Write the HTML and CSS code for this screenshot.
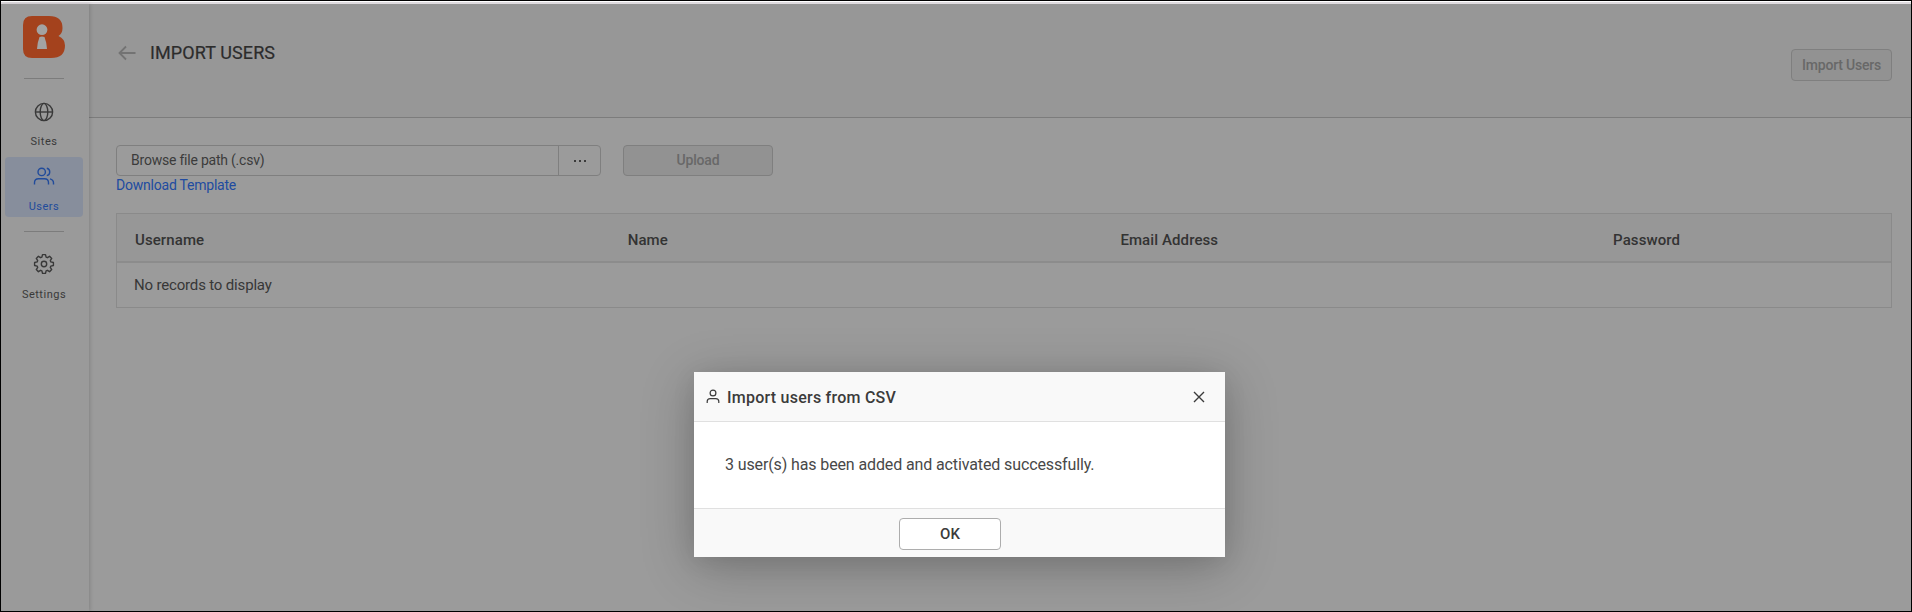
FILE: index.html
```html
<!DOCTYPE html>
<html lang="en">
<head>
<meta charset="utf-8">
<title>Import Users</title>
<link rel="stylesheet" href="styles.css">
</head>
<body>
<div class="app">
  <nav class="sidebar">
    <svg class="logo" width="42" height="42" viewBox="0 0 42 42"><path fill="#a4421d" d="M9 0H26Q39.500 0 39.500 12Q39.500 17.500 35.500 20Q42 23 42 29.500Q42 42 28 42H9Q0 42 0 33V9Q0 0 9 0Z"/><circle cx="19" cy="13.700" r="5.400" fill="#a3a3a3"/><path fill="#a3a3a3" d="M16.500 21Q19 20 21.500 21Q23.500 26 24 33H14Q14.500 26 16.500 21Z"/></svg>
    <div class="rule"></div>
    <a class="nav-item first"><svg width="22" height="22" viewBox="0 0 22 22"><circle cx="11" cy="11" r="8.600"/><ellipse cx="11" cy="11" rx="3.800" ry="8.600"/><path d="M2.500 11H19.500"/></svg><span>Sites</span></a>
    <a class="nav-item active"><svg width="22" height="22" viewBox="0 0 22 22"><circle cx="8.700" cy="5.900" r="3.700"/><path d="M1.500 18.500V16.800Q1.500 12.800 5.500 12.800H11.500Q15.500 12.800 15.500 16.800V18.500M13.800 2.200A3.800 3.800 0 0 1 13.800 9.600M17 12.900Q20.500 13.700 20.500 17V18.500"/></svg><span>Users</span></a>
    <div class="rule lower"></div>
    <a class="nav-item"><svg width="22" height="22" viewBox="0 0 22 22"><circle cx="11" cy="11" r="2.700"/><path stroke-linejoin="round" d="M9.500 1.600H12.500L13.100 4.200L14.400 4.700L16.600 3.300L18.700 5.400L17.300 7.600L17.800 8.900L20.400 9.500V12.500L17.800 13.100L17.300 14.400L18.700 16.600L16.600 18.700L14.400 17.300L13.100 17.800L12.500 20.400H9.500L8.900 17.800L7.600 17.300L5.400 18.700L3.300 16.600L4.700 14.400L4.200 13.100L1.600 12.500V9.500L4.200 8.900L4.700 7.600L3.300 5.400L5.400 3.300L7.600 4.700L8.900 4.200Z"/></svg><span>Settings</span></a>
  </nav>
  <main class="page">
    <header class="page-header">
      <div class="heading"><svg width="18" height="16" viewBox="0 0 18 16"><path d="M17.500 8H1.500M8 1.500L1.500 8L8 14.500"/></svg><h1>IMPORT USERS</h1></div>
      <button class="btn import">Import Users</button>
    </header>
    <section class="content">
      <div class="upload-row">
        <div class="picker"><span class="path">Browse file path (.csv)</span><span class="browse"><i></i><i></i><i></i></span></div>
        <button class="btn upload">Upload</button>
      </div>
      <a class="template">Download Template</a>
      <div class="grid">
        <div class="grid-head"><span>Username</span><span>Name</span><span>Email Address</span><span>Password</span></div>
        <div class="grid-empty">No records to display</div>
      </div>
    </section>
  </main>
</div>
<div class="dialog">
  <div class="dialog-head"><svg class="person" width="14" height="15" viewBox="0 0 14 15"><circle cx="7" cy="4" r="2.900"/><path d="M1.200 14V12.500Q1.200 9.600 4.200 9.600H9.800Q12.800 9.600 12.800 12.500V14"/></svg><h2>Import users from CSV</h2><svg class="close" width="12" height="12" viewBox="0 0 12 12"><path d="M1 1L11 11M11 1L1 11"/></svg></div>
  <div class="dialog-body">3 user(s) has been added and activated successfully.</div>
  <div class="dialog-foot"><button class="ok">OK</button></div>
</div>
</body>
</html>
```
FILE: styles.css
```css
* { box-sizing: border-box; }
body { margin: 0; font-family: Roboto, "Liberation Sans", sans-serif; color: #333; background: #9b9b9b; }
svg { fill: none; stroke: currentColor; stroke-width: 1.4; display: block; }
h1, h2 { margin: 0; font-weight: 500; }
button { font-family: inherit; padding: 0; }
.app { display: flex; width: 1912px; height: 612px; border: 1px solid #000; overflow: hidden; box-shadow: inset 0 1px #fff, inset 0 3px #e0dce0; padding-top: 3px; }
.sidebar { width: 88px; flex: none; display: flex; flex-direction: column; align-items: center; background: #9a9a9a; padding: 12px 2px 0 0; box-shadow: 1px 0 4px rgba(0,0,0,.16); z-index: 1; }
.logo { stroke: none; }
.rule { width: 40px; height: 1px; background: #7c7c7c; margin-top: 20px; }
.nav-item { width: 78px; height: 60px; border-radius: 4px; display: flex; flex-direction: column; align-items: center; padding-top: 9px; font-size: 11px; line-height: 14px; letter-spacing: .5px; color: #393939; }
.nav-item span { margin-top: 12px; }
.first { height: 65px; margin-top: 13px; }
.active { background: #878e9c; color: #214b9b; }
.rule.lower { margin-top: 14px; }
.rule.lower + .nav-item { margin-top: 12px; }
.rule.lower + .nav-item span { margin-top: 13px; }
.page { flex: 1; display: flex; flex-direction: column; }
.page-header { height: 114px; background: #979797; border-bottom: 1px solid #7c7c7c; display: flex; justify-content: space-between; padding: 39px 19px 0 29px; }
.heading { display: flex; height: 20px; gap: 14px; align-items: center; }
.heading svg { color: #737373; stroke-width: 1.8; }
h1 { font-size: 18px; font-weight: 400; color: #2c2c2c; line-height: 20px; letter-spacing: .1px; -webkit-text-stroke: .2px #2c2c2c; }
.btn { border: 1px solid #7f7f7f; background: #929292; color: #686868; border-radius: 4px; font-size: 14px; letter-spacing: -.2px; font-weight: 500; padding-bottom: 1px; }
.import { width: 101px; height: 32px; margin-top: 6px; }
.content { padding: 27px 19px 0 27px; }
.upload-row { display: flex; gap: 22px; }
.picker { display: flex; width: 485px; height: 31px; border: 1px solid #7f7f7f; border-radius: 4px; font-size: 14px; letter-spacing: -.22px; line-height: 29px; color: #3b3b3b; }
.path { flex: 1; padding-left: 14px; }
.browse { width: 42px; border-left: 1px solid #7f7f7f; display: flex; align-items: center; justify-content: center; gap: 3px; }
.browse i { width: 2px; height: 2px; background: #3b3b3b; }
.upload { width: 150px; height: 31px; }
.template { display: block; font-size: 14px; letter-spacing: -.22px; line-height: 18px; color: #214ba0; }
.grid { margin-top: 19px; border: 1px solid #8a8a8a; height: 95px; }
.grid-head { height: 49px; background: #979797; border-bottom: 2px solid #8c8c8c; display: grid; grid-template-columns: 492.7px 492.7px 492.7px 1fr; padding: 16px 0 0 18px; font-size: 15px; font-weight: 500; line-height: 20px; letter-spacing: .1px; color: #333; }
.grid-empty { padding-left: 17px; font-size: 15px; letter-spacing: -.17px; line-height: 44px; color: #373737; }
.dialog { position: absolute; left: 694px; top: 372px; width: 531px; height: 185px; background: #fff; display: flex; flex-direction: column; z-index: 2; box-shadow: 0 10px 50px rgba(0,0,0,.24), 0 4px 22px rgba(0,0,0,.08); color: #3b3b3b; }
.dialog-head { height: 50px; background: #f9f9f9; border-bottom: 1px solid #e0e0e0; display: flex; align-items: center; padding: 0 20px 0 12px; }
.person { stroke-width: 1.2; margin-top: -1px; }
.dialog-head h2 { font-size: 16px; letter-spacing: .24px; line-height: 20px; margin: 2px auto 0 7px; }
.close { stroke-width: 1.4; }
.dialog-body { height: 86px; padding-left: 31px; font-size: 16px; letter-spacing: -.12px; line-height: 86px; color: #484848; }
.dialog-foot { height: 49px; background: #f9f9f9; border-top: 1px solid #e0e0e0; padding: 9px 0 0 205px; }
.ok { display: block; width: 102px; height: 32px; border: 1px solid #adadad; border-radius: 4px; background: #fff; color: #3b3b3b; font-size: 15px; font-weight: 500; }
```
